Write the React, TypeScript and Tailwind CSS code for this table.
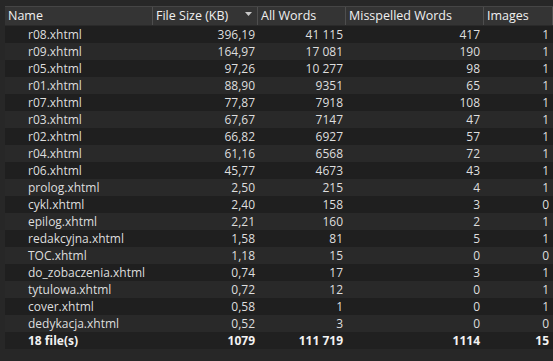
import React from 'react'

type Row = { name: string, size: string, words: string, miss: string, images: string }

const rows: Row[] = [
  { name: 'r08.xhtml', size: '396,19', words: '41 115', miss: '417', images: '1' },
  { name: 'r09.xhtml', size: '164,97', words: '17 081', miss: '190', images: '1' },
  { name: 'r05.xhtml', size: '97,26', words: '10 277', miss: '98', images: '1' },
  { name: 'r01.xhtml', size: '88,90', words: '9351', miss: '65', images: '1' },
  { name: 'r07.xhtml', size: '77,87', words: '7918', miss: '108', images: '1' },
  { name: 'r03.xhtml', size: '67,67', words: '7147', miss: '47', images: '1' },
  { name: 'r02.xhtml', size: '66,82', words: '6927', miss: '57', images: '1' },
  { name: 'r04.xhtml', size: '61,16', words: '6568', miss: '72', images: '1' },
  { name: 'r06.xhtml', size: '45,77', words: '4673', miss: '43', images: '1' },
  { name: 'prolog.xhtml', size: '2,50', words: '215', miss: '4', images: '1' },
  { name: 'cykl.xhtml', size: '2,40', words: '158', miss: '3', images: '0' },
  { name: 'epilog.xhtml', size: '2,21', words: '160', miss: '2', images: '1' },
  { name: 'redakcyjna.xhtml', size: '1,58', words: '81', miss: '5', images: '1' },
  { name: 'TOC.xhtml', size: '1,18', words: '15', miss: '0', images: '0' },
  { name: 'do_zobaczenia.xhtml', size: '0,74', words: '17', miss: '3', images: '1' },
  { name: 'tytulowa.xhtml', size: '0,72', words: '12', miss: '0', images: '1' },
  { name: 'cover.xhtml', size: '0,58', words: '1', miss: '0', images: '1' },
  { name: 'dedykacja.xhtml', size: '0,52', words: '3', miss: '0', images: '0' },
]

const cols = 'grid grid-cols-[148px_105px_88px_138px_1fr]'

function HeaderCell({ label, sort }: { label: string, sort?: boolean }){
  return (
    <div className="relative flex items-center pl-[3px] pt-[1px] border-r border-[#4e4e4e] whitespace-nowrap overflow-hidden">
      {label}
      {sort ? (
        <svg className="absolute right-[4px] top-[5px]" width="8" height="5" viewBox="0 0 8 5">
          <path d="M0 0 H7 L3.5 4 Z" fill="#c8c8c8" />
        </svg>
      ) : null}
    </div>
  )
}

export default function App(){
  return (
    <div className="w-[553px] h-[361px] overflow-hidden bg-[#272727] pt-[6px] pl-[5px] text-[12px] text-[#dedede]" style={{ fontFamily: '"Open Sans", "Noto Sans", sans-serif' }}>
      <div className={`${cols} h-[20px] bg-[#343434] border-t border-[#454545] border-b border-b-[#2a2a2a] text-[12.5px] text-[#f0f0f0] leading-none`}>
        <HeaderCell label="Name" />
        <HeaderCell label="File Size (KB)" sort />
        <HeaderCell label="All Words" />
        <HeaderCell label="Misspelled Words" />
        <HeaderCell label="Images" />
      </div>
      {rows.map((r, i) => (
        <div key={r.name} className={`${cols} h-[17px] items-center leading-none pt-[1px] ${i % 2 === 0 ? 'bg-[#1f1f1f]' : 'bg-[#292929]'}`}>
          <div className="pl-[23px] whitespace-nowrap">{r.name}</div>
          <div className="text-right pr-[3px]">{r.size}</div>
          <div className="text-right pr-[3px]">{r.words}</div>
          <div className="text-right pr-[4px]">{r.miss}</div>
          <div className="text-right pr-[4px]">{r.images}</div>
        </div>
      ))}
      <div className={`${cols} h-[17px] items-center leading-none pt-[1px] bg-[#202020] font-bold text-[#f2f2f2]`}>
        <div className="pl-[23px]">18 file(s)</div>
        <div className="text-right pr-[3px]">1079</div>
        <div className="text-right pr-[3px]">111 719</div>
        <div className="text-right pr-[4px]">1114</div>
        <div className="text-right pr-[4px]">15</div>
      </div>
    </div>
  )
}
